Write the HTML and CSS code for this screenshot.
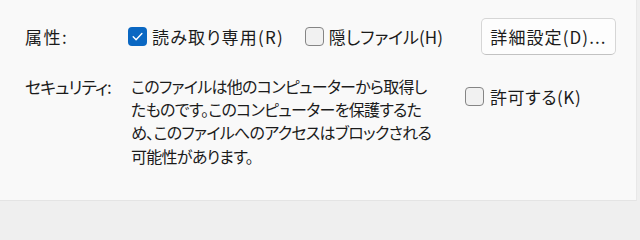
FILE: index.html
```html
<!DOCTYPE html>
<html lang="ja">
<head>
<meta charset="utf-8">
<link rel="stylesheet" href="styles.css">
</head>
<body>
<div class="panel">
  <div class="row row-attr">
    <div class="label label-attr">属性:</div>
    <div class="attr-controls">
      <label class="check">
        <span class="box checked">
          <svg viewBox="0 0 19 19" width="19" height="19"><path d="M5.2 9.8 L8.1 12.7 L13.9 6.6" fill="none" stroke="#ffffff" stroke-width="1.4" stroke-linecap="round" stroke-linejoin="round"/></svg>
        </span>
        <span class="text text-wide">読み取り専用(R)</span>
      </label>
      <label class="check check-hidden">
        <span class="box"></span>
        <span class="text">隠しファイル(H)</span>
      </label>
      <button class="btn">詳細設定(D)...</button>
    </div>
  </div>
  <div class="row row-sec">
    <div class="label label-sec">セキュリティ:</div>
    <div class="sec-content">
      <p class="sec-text">このファイルは他のコンピューターから取得し<br>たものです。このコンピューターを保護するた<br>め、このファイルへのアクセスはブロックされる<br>可能性があります。</p>
      <label class="check check-allow">
        <span class="box"></span>
        <span class="text text-allow">許可する(K)</span>
      </label>
    </div>
  </div>
</div>
</body>
</html>
```
FILE: styles.css
```css
html, body {
  margin: 0;
  padding: 0;
}
html {
  background: #efefef;
}
body {
  width: 640px;
  height: 205px;
  background: #efefef;
  font-family: "Noto Sans CJK JP", "Noto Sans", sans-serif;
  font-size: 17px;
  font-feature-settings: "palt";
  color: #1b1b1b;
  overflow: hidden;
}
.panel {
  width: 637px;
  height: 201px;
  box-sizing: border-box;
  background: #f9f9f9;
  border-right: 1px solid #e8e8e8;
  border-bottom: 1px solid #e4e4e4;
  padding: 18px 20px 0 25px;
}
.row {
  display: flex;
}
.label {
  width: 103px;
  flex: none;
}
.label-attr {
  letter-spacing: 1.5px;
}
.label-sec {
  line-height: 23px;
  letter-spacing: -1px;
  white-space: nowrap;
}
.row-attr {
  height: 37px;
  align-items: center;
}
.attr-controls {
  flex: 1;
  display: flex;
  align-items: center;
}
.check {
  display: flex;
  align-items: center;
  gap: 5px;
}
.text-wide {
  letter-spacing: 1.2px;
}
.text-allow {
  letter-spacing: 0.6px;
}
.check-hidden {
  margin-left: 21px;
}
.box {
  width: 19px;
  height: 19px;
  box-sizing: border-box;
  border: 1px solid #858585;
  border-radius: 4px;
  background: #f1f1f1;
  flex: none;
  display: block;
}
.box.checked {
  border: none;
  background: #0a67c2;
}
.box svg {
  display: block;
}
.btn {
  margin-left: auto;
  width: 135px;
  height: 37px;
  box-sizing: border-box;
  border: 1px solid #d6d6d6;
  border-bottom-color: #c2c2c2;
  border-radius: 5px;
  background: #fdfdfd;
  font: inherit;
  font-feature-settings: "palt";
  letter-spacing: 1.1px;
  color: #1b1b1b;
  padding: 0;
}
.row-sec {
  margin-top: 20px;
  align-items: flex-start;
}
.sec-content {
  display: flex;
  align-items: flex-start;
}
.sec-text {
  margin: 0 0 0 3px;
  width: 322px;
  font-size: 16px;
  line-height: 23.2px;
  letter-spacing: -0.7px;
  white-space: nowrap;
}
.check-allow {
  margin-left: 12px;
  margin-top: 9px;
  gap: 6px;
}
```
